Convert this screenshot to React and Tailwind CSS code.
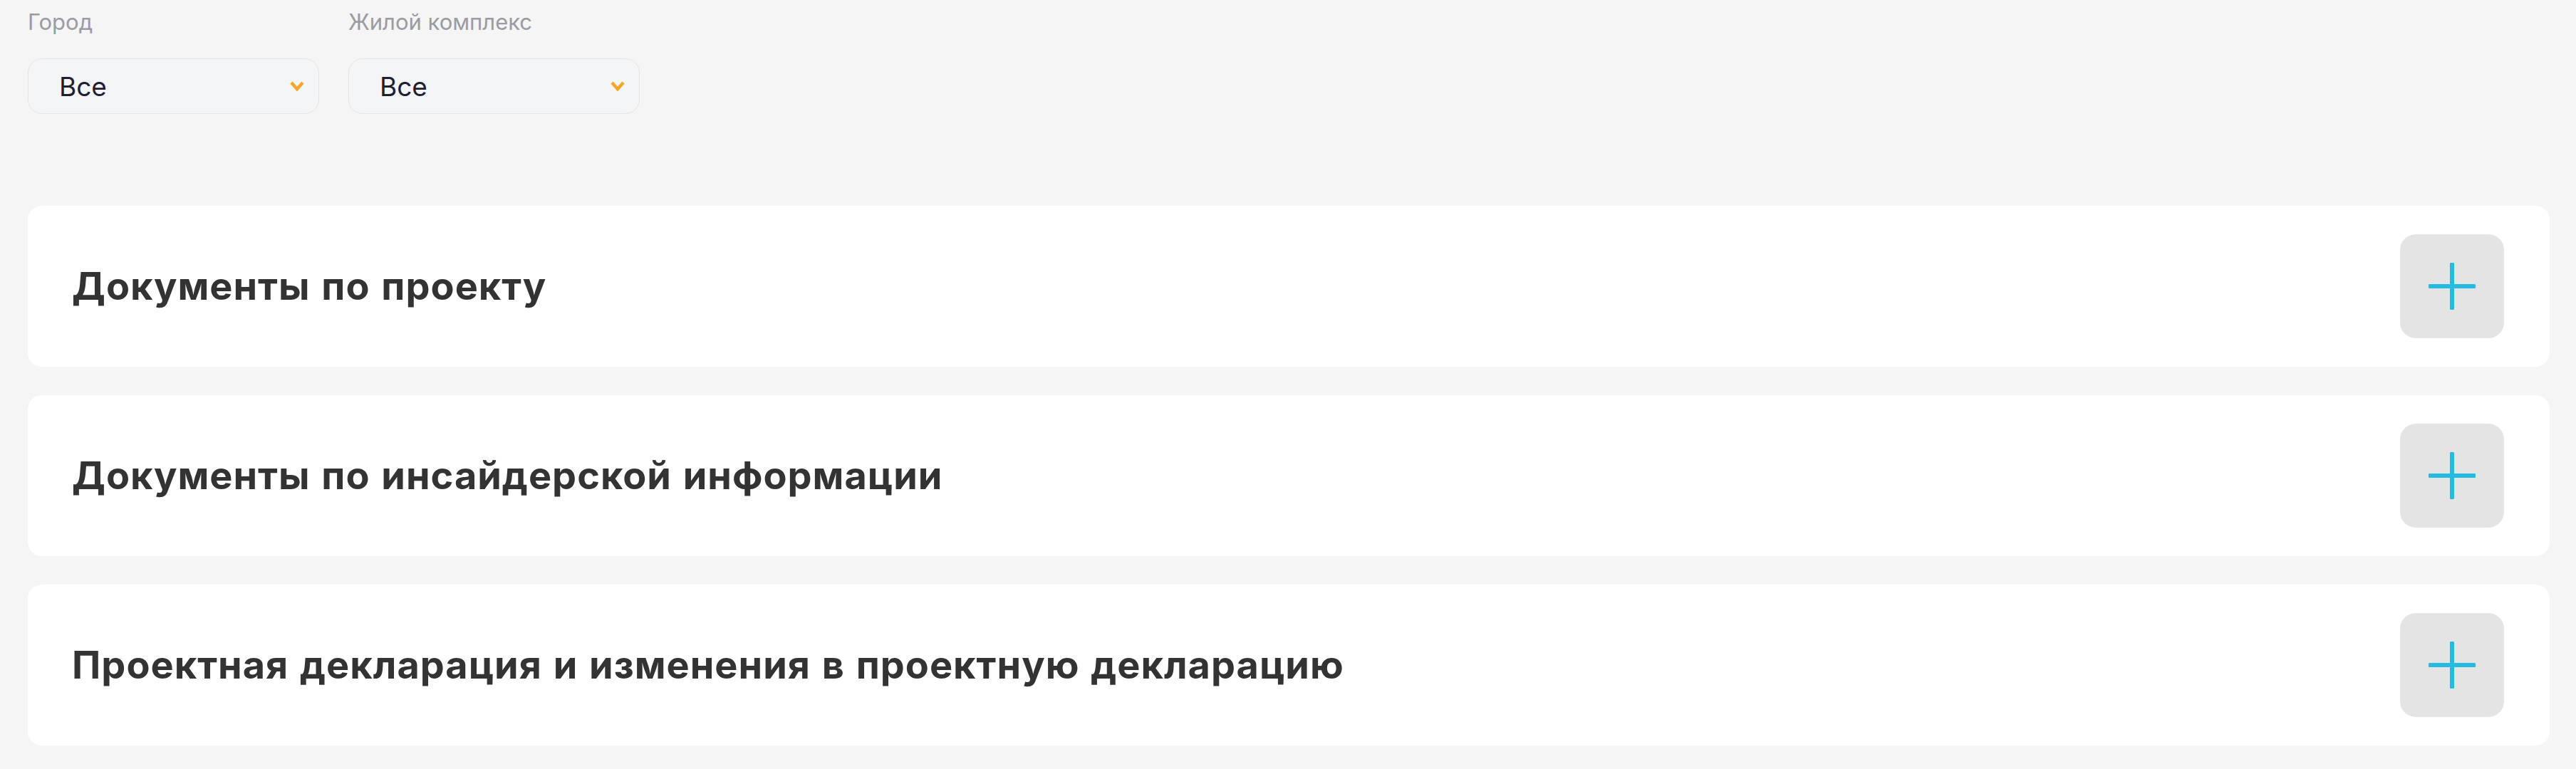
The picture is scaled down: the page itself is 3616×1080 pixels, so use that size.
import React from "react";

const font = { fontFamily: "Inter, 'Noto Sans', sans-serif" };

function Chevron() {
  return (
    <svg width="22" height="16" viewBox="0 0 22 16" fill="none">
      <polyline points="3,3 11,12 19,3" stroke="#f7a62b" strokeWidth="4.5" strokeLinecap="butt" strokeLinejoin="miter" />
    </svg>
  );
}

function Select({ label }) {
  return (
    <div className="flex flex-col">
      <div className="text-[31px] leading-[38px] text-[#9b9ba3] h-[38px]">{label}</div>
      <div className="mt-[32px] w-[409px] h-[78px] rounded-[20px] border-[1.5px] border-[#e3e4e9] bg-[#f4f5f7] flex items-center justify-between pl-[43px] pr-[19px]">
        <span className="text-[37px] leading-none text-[#1f1e33]">Все</span>
        <Chevron />
      </div>
    </div>
  );
}

function Plus() {
  return (
    <svg width="66" height="66" viewBox="0 0 66 66" fill="none">
      <line x1="2" y1="33" x2="64" y2="33" stroke="#23bbe0" strokeWidth="6" strokeLinecap="round" />
      <line x1="33" y1="2" x2="33" y2="64" stroke="#23bbe0" strokeWidth="6" strokeLinecap="round" />
    </svg>
  );
}

function Card({ title }) {
  return (
    <div className="h-[226px] bg-white rounded-[20px] flex items-center justify-between pl-[62px] pr-[64px]">
      <span className="text-[54px] font-bold text-[#333333] leading-none tracking-[1px] [word-spacing:2px]">{title}</span>
      <div className="w-[146px] h-[146px] rounded-[22px] bg-[#e4e4e4] flex items-center justify-center">
        <Plus />
      </div>
    </div>
  );
}

export default function App() {
  return (
    <div style={font} className="min-h-[1080px] w-full bg-[#f5f5f5] pl-[39px] pr-[37px] pt-[12px] pb-[33px]">
      <div className="flex gap-[41px]">
        <Select label="Город" />
        <Select label="Жилой комплекс" />
      </div>
      <div className="mt-[129px] flex flex-col gap-[40px]">
        <Card title="Документы по проекту" />
        <Card title="Документы по инсайдерской информации" />
        <Card title="Проектная декларация и изменения в проектную декларацию" />
      </div>
    </div>
  );
}
